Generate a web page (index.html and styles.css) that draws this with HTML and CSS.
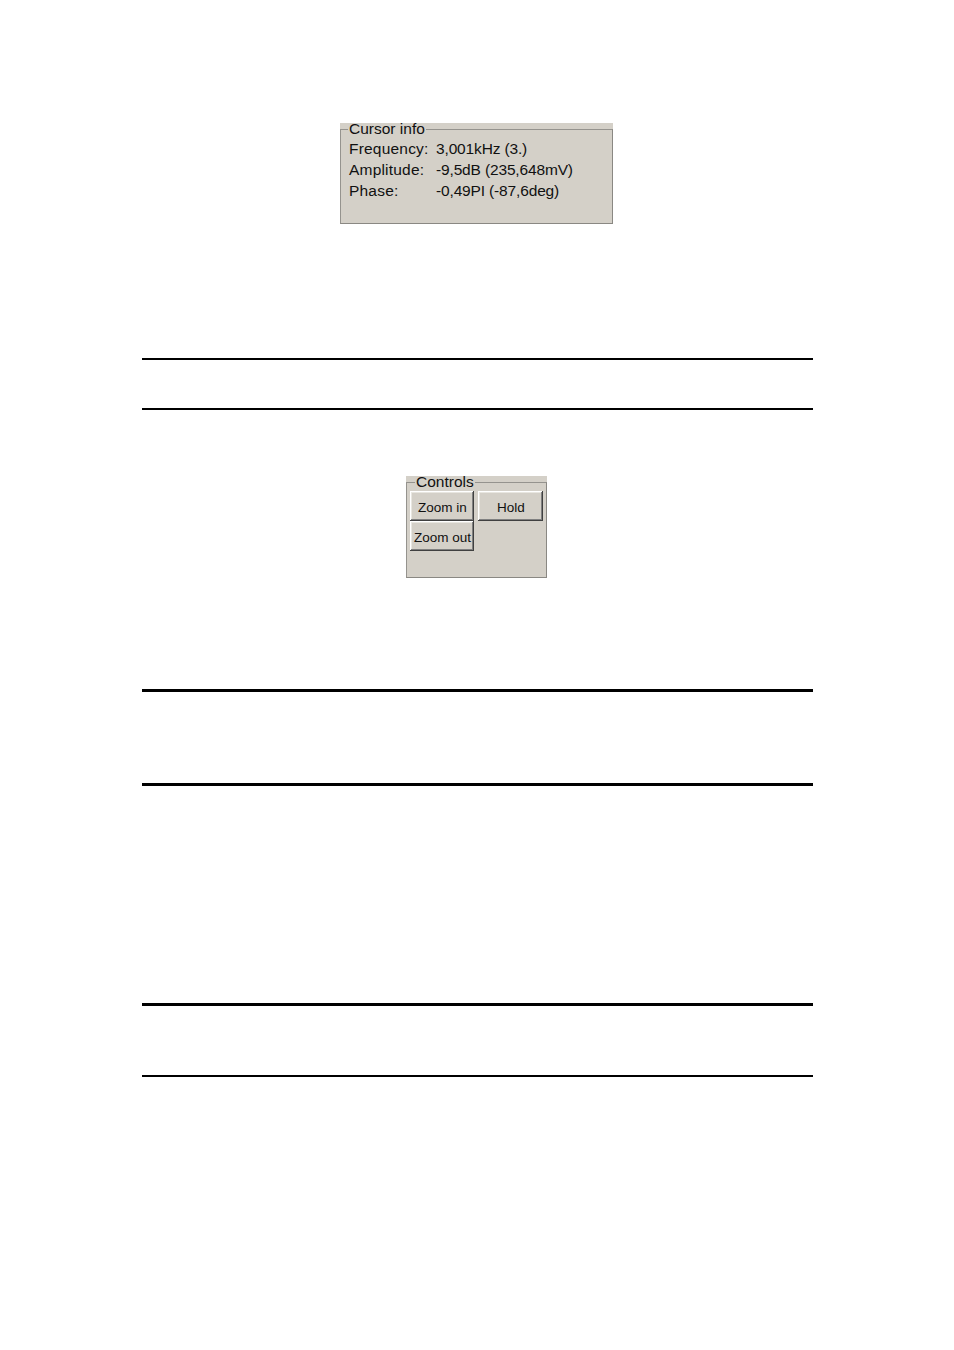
FILE: index.html
```html
<!DOCTYPE html>
<html>
<head>
<meta charset="utf-8">
<title>Cursor info</title>
<link rel="stylesheet" href="styles.css">
</head>
<body>
<main class="page">
  <div class="panel panel-cursor">
    <fieldset class="group group-cursor">
      <legend class="group-title">Cursor info</legend>
      <div class="info-grid">
        <span class="info-label">Frequency:</span><span class="info-value">3,001kHz (3.)</span>
        <span class="info-label">Amplitude:</span><span class="info-value">-9,5dB (235,648mV)</span>
        <span class="info-label">Phase:</span><span class="info-value">-0,49PI (-87,6deg)</span>
      </div>
    </fieldset>
  </div>

  <div class="rule rule-thin rule-1"></div>
  <div class="rule rule-thin rule-2"></div>

  <div class="panel panel-controls">
    <fieldset class="group group-controls">
      <legend class="group-title group-title-controls">Controls</legend>
      <div class="button-grid">
        <button class="btn">Zoom in</button>
        <button class="btn btn-hold">Hold</button>
        <button class="btn">Zoom out</button>
      </div>
    </fieldset>
  </div>

  <div class="rule rule-thick rule-3"></div>
  <div class="rule rule-thick rule-4"></div>
  <div class="rule rule-thick rule-5"></div>
  <div class="rule rule-thin rule-6"></div>
</main>
</body>
</html>
```

FILE: styles.css
```css
html, body {
  margin: 0;
  padding: 0;
  background: #ffffff;
}

.page {
  padding-top: 123px;
  font-family: "Liberation Sans", Arial, sans-serif;
  color: #111111;
}

.panel {
  background: #d4d0c8;
}

.panel-cursor {
  margin-left: 340px;
  width: 273px;
}

.panel-controls {
  margin-left: 406px;
  width: 141px;
  margin-top: 66px;
}

.group {
  margin: 0;
  min-width: 0;
  border: 1px solid #95938e;
  border-right-color: #8a8883;
  border-bottom-color: #8a8883;
  background: #d4d0c8;
}

.group-cursor {
  padding: 3px 8px 22px 8px;
}

.group-controls {
  padding: 3px 3px 26px 3px;
}

.group-title {
  padding: 0 1px;
  margin-left: -1px;
  font-size: 15.5px;
  line-height: 12px;
  color: #111111;
}

.group-title-controls {
  margin-left: 5px;
}

.info-grid {
  display: grid;
  grid-template-columns: 87px 1fr;
  font-size: 15.5px;
  line-height: 21px;
  white-space: nowrap;
}

.info-label {
  letter-spacing: 0.2px;
}

.info-value {
  letter-spacing: -0.15px;
}

.button-grid {
  display: grid;
  grid-template-columns: 64px 65px;
  grid-auto-rows: 30px;
  column-gap: 4px;
}

.btn {
  margin: 0;
  padding: 2px 0 0 1px;
  font-family: "Liberation Sans", Arial, sans-serif;
  font-size: 13.5px;
  color: #111111;
  background: #d4d0c8;
  border: none;
  box-shadow:
    inset -1px -1px 0 #404040,
    inset 1px 1px 0 #ffffff,
    inset -2px -2px 0 #808080,
    inset 2px 2px 0 #e8e6e0;
  white-space: nowrap;
}

.rule {
  margin-left: 142px;
  width: 671px;
  background: #000000;
}

.rule-thin {
  height: 2px;
}

.rule-thick {
  height: 3px;
}

.rule-1 { margin-top: 134px; }
.rule-2 { margin-top: 48px; }
.rule-3 { margin-top: 111px; }
.rule-4 { margin-top: 91px; }
.rule-5 { margin-top: 217px; }
.rule-6 { margin-top: 69px; }
```
